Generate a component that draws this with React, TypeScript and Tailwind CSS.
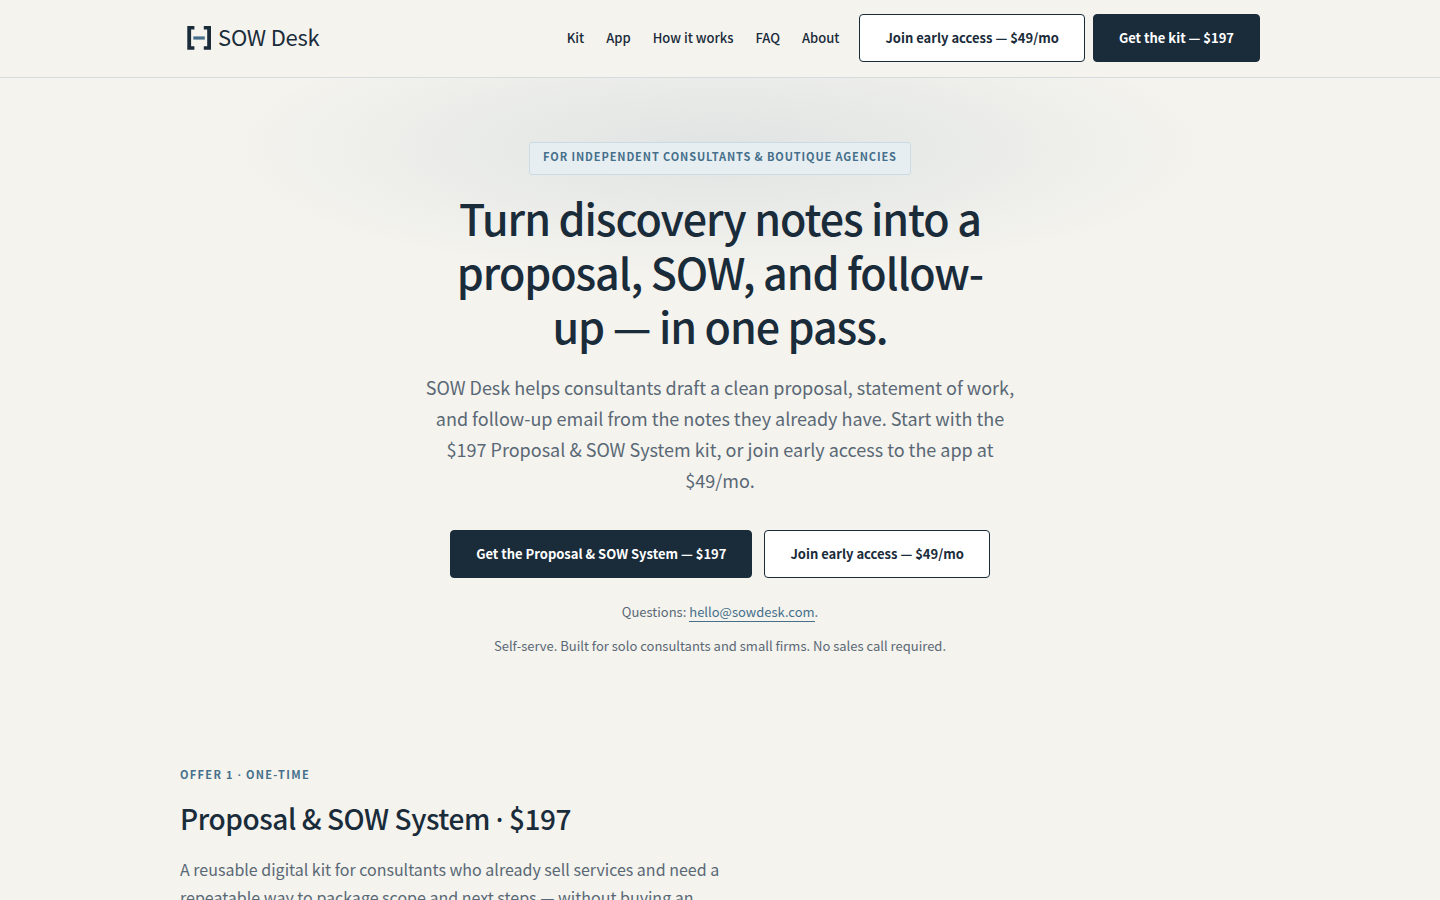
const navLinks = [
  { label: "Kit", href: "#kit" },
  { label: "App", href: "#app" },
  { label: "How it works", href: "#how-it-works" },
  { label: "FAQ", href: "#faq" },
  { label: "About", href: "#about" },
];

const buttonBase =
  "flex h-12 items-center justify-center rounded border border-[#1a2b3a] px-[25px] pb-px text-[13px] font-bold whitespace-nowrap";

function PrimaryLink({ href, label }: { href: string; label: string }) {
  return (
    <a href={href} className={`${buttonBase} bg-[#1a2b3a] text-white`}>
      {label}
    </a>
  );
}

function SecondaryLink({ href, label }: { href: string; label: string }) {
  return (
    <a href={href} className={`${buttonBase} bg-white text-[#1a2b3a]`}>
      {label}
    </a>
  );
}

// the CJK family draws its middle dot too wide
function Dot() {
  return <span className="font-['Noto_Sans',sans-serif]">·</span>;
}

function LogoMark() {
  return (
    <svg viewBox="0 0 32 32" className="size-8" aria-hidden="true">
      <path d="M7.3 4H14.4V7.6H11.1V24.2H14.4V27.8H7.3Z" fill="#1a2b3a" />
      <path d="M31 4H23.8V7.6H27.2V24.2H23.8V27.8H31Z" fill="#1a2b3a" />
      <path d="M13.3 14.4H24.8V17.6H13.3Z" fill="#456f8a" />
    </svg>
  );
}

function Header() {
  return (
    <header className="border-b border-[#d5dbde]">
      <div className="mx-auto flex max-w-[1080px] items-center justify-between pt-3.5 pb-[15px]">
        <a href="#top" className="flex items-center gap-1.5">
          <LogoMark />
          <span className="pb-1 text-[22px] leading-8 tracking-[-0.01em]">SOW Desk</span>
        </a>
        <div className="flex items-center gap-5">
          <nav className="flex items-center gap-[22px] text-[13px] font-medium">
            {navLinks.map((link) => (
              <a key={link.href} href={link.href}>
                {link.label}
              </a>
            ))}
          </nav>
          <div className="flex gap-2">
            <SecondaryLink href="#early-access" label="Join early access — $49/mo" />
            <PrimaryLink href="#kit" label="Get the kit — $197" />
          </div>
        </div>
      </div>
    </header>
  );
}

function Hero() {
  return (
    <section className="bg-[radial-gradient(ellipse_490px_130px_at_50%_70px,#456f8a1e,transparent)] pt-16 pb-27 text-center">
      <div className="mx-auto flex max-w-[600px] flex-col items-center">
        <p className="rounded-[3px] border border-[#cbdbe6] bg-[#e7eef2] px-[13px] pt-1 pb-2 text-[11px] leading-[19px] font-bold tracking-[0.08em] text-[#456f8a] uppercase">
          For independent consultants &amp; boutique agencies
        </p>
        <h1 className="mt-[15px] max-w-[560px] text-[43px] leading-[54px] font-medium tracking-tight">
          Turn discovery notes into a proposal, SOW, and follow-up — in one pass.
        </h1>
        <p className="mt-5 text-lg leading-[31px] text-[#5a6875]">
          SOW Desk helps consultants draft a clean proposal, statement of work, and follow-up email
          from the notes they already have. Start with the $197 Proposal &amp; SOW System kit, or
          join early access to the app at $49/mo.
        </p>
        <div className="mt-[34px] flex gap-3">
          <PrimaryLink href="#kit" label="Get the Proposal &amp; SOW System — $197" />
          <SecondaryLink href="#early-access" label="Join early access — $49/mo" />
        </div>
        <p className="mt-[23px] text-[13px] leading-[22px] text-[#5a6875]">
          Questions:{" "}
          <a href="mailto:hello@sowdesk.com" className="border-b border-[#456f8a] text-[#456f8a]">
            hello@sowdesk.com
          </a>
          .
        </p>
        <p className="mt-3 text-[13px] leading-[22px] text-[#5a6875]">
          Self-serve. Built for solo consultants and small firms. No sales call required.
        </p>
      </div>
    </section>
  );
}

function KitOffer() {
  return (
    <section id="kit" className="mx-auto max-w-[1080px]">
      <p className="text-[11px] leading-[19px] font-bold tracking-[0.12em] text-[#456f8a] uppercase">
        Offer 1 <Dot /> One-time
      </p>
      <h2 className="mt-[13px] text-[28px] leading-[42px] font-medium tracking-[-0.015em]">
        Proposal &amp; SOW System <Dot /> $197
      </h2>
      <p className="mt-[15px] max-w-[560px] text-base leading-7 text-[#5a6875]">
        A reusable digital kit for consultants who already sell services and need a repeatable way
        to package scope and next steps — without buying an
      </p>
    </section>
  );
}

export default function App() {
  return (
    <div
      id="top"
      className="min-h-screen bg-[#f4f3ee] font-['Noto_Sans_CJK_KR',sans-serif] text-[#1a2b3a]"
    >
      <Header />
      <main>
        <Hero />
        <KitOffer />
      </main>
    </div>
  );
}
